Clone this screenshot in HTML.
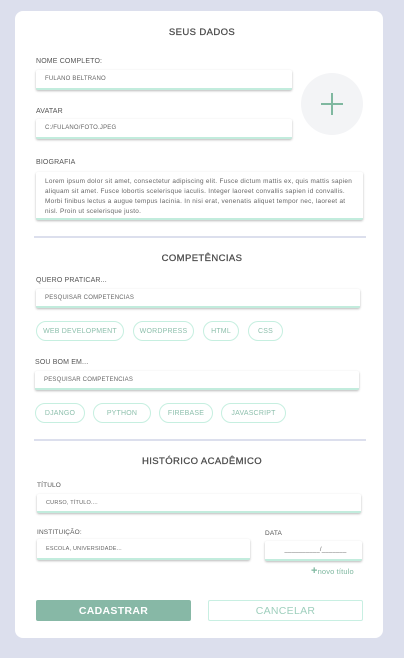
<!DOCTYPE html>
<html><head><meta charset="utf-8"><style>
*{margin:0;padding:0;box-sizing:border-box}
body{width:404px;height:658px;background:#dcdfed;font-family:"Liberation Sans",sans-serif;position:relative;overflow:hidden;color:#555}
.card{position:absolute;left:15px;top:11px;width:368px;height:627px;background:#fff;border-radius:8px}
.a{position:absolute}
.h{position:absolute;left:0;width:404px;text-align:center;font-size:9.5px;color:#4a4a4a;letter-spacing:.4px;-webkit-text-stroke:.25px #4a4a4a}
.l{position:absolute;font-size:7px;color:#555;white-space:nowrap;letter-spacing:.15px}
.in{position:absolute;background:#fff;border-bottom:2px solid #c2ecdd;box-shadow:0 1px 2px rgba(0,0,0,.28);border-radius:2px;font-size:6px;color:#666;padding-left:9px;display:flex;align-items:center;white-space:nowrap;letter-spacing:.2px}
.chip{position:absolute;border:1.5px solid #c6efe0;border-radius:10px;font-size:7px;color:#8dbfac;display:flex;align-items:center;justify-content:center;white-space:nowrap;letter-spacing:.2px}
.div{position:absolute;left:34px;width:332px;height:1.5px;background:#dcdfed}
</style></head><body>
<div class="card"></div>
<div class="h" style="top:27px">SEUS DADOS</div>
<div class="l" style="left:36px;top:58px">NOME COMPLETO:</div>
<div class="in" style="left:36px;top:70px;width:256px;height:20px">FULANO BELTRANO</div>
<div class="l" style="left:36px;top:108px">AVATAR</div>
<div class="in" style="left:36px;top:119px;width:256px;height:20px">C:/FULANO/FOTO.JPEG</div>
<div class="a" style="left:301px;top:73px;width:62px;height:62px;border-radius:50%;background:#f3f4f6"></div>
<div class="a" style="left:321px;top:103px;width:22px;height:2px;background:#7fb8a0"></div>
<div class="a" style="left:331px;top:93px;width:2px;height:22px;background:#7fb8a0"></div>
<div class="l" style="left:36px;top:159px">BIOGRAFIA</div>
<div class="in" style="left:36px;top:172px;width:327px;height:48px;display:block;padding:5px 9px 0 9px;font-size:6.4px;line-height:10px;white-space:normal;color:#666;letter-spacing:.3px">Lorem ipsum dolor sit amet, consectetur adipiscing elit. Fusce dictum mattis ex, quis mattis sapien aliquam sit amet. Fusce lobortis scelerisque iaculis. Integer laoreet convallis sapien id convallis. Morbi finibus lectus a augue tempus lacinia. In nisi erat, venenatis aliquet tempor nec, laoreet at nisl. Proin ut scelerisque justo.</div>
<div class="div" style="top:236px"></div>
<div class="h" style="top:253px">COMPETÊNCIAS</div>
<div class="l" style="left:36px;top:277px">QUERO PRATICAR...</div>
<div class="in" style="left:36px;top:289px;width:324px;height:19px">PESQUISAR COMPETENCIAS</div>
<div class="chip" style="left:36px;top:321px;width:88px;height:20px">WEB DEVELOPMENT</div>
<div class="chip" style="left:133px;top:321px;width:61px;height:20px">WORDPRESS</div>
<div class="chip" style="left:203px;top:321px;width:36px;height:20px">HTML</div>
<div class="chip" style="left:248px;top:321px;width:35px;height:20px">CSS</div>
<div class="l" style="left:35px;top:359px">SOU BOM EM...</div>
<div class="in" style="left:35px;top:371px;width:324px;height:19px">PESQUISAR COMPETENCIAS</div>
<div class="chip" style="left:35px;top:403px;width:50px;height:20px">DJANGO</div>
<div class="chip" style="left:93px;top:403px;width:58px;height:20px">PYTHON</div>
<div class="chip" style="left:159px;top:403px;width:54px;height:20px">FIREBASE</div>
<div class="chip" style="left:221px;top:403px;width:65px;height:20px">JAVASCRIPT</div>
<div class="div" style="top:439px"></div>
<div class="h" style="top:456px">HISTÓRICO ACADÊMICO</div>
<div class="l" style="left:37px;top:482px;font-size:6.5px">TÍTULO</div>
<div class="in" style="left:37px;top:494px;width:324px;height:19px;font-size:5.5px">CURSO, TÍTULO....</div>
<div class="l" style="left:37px;top:529px;font-size:6.5px">INSTITUIÇÃO:</div>
<div class="in" style="left:37px;top:539px;width:213px;height:21px;font-size:5.5px">ESCOLA, UNIVERSIDADE...</div>
<div class="l" style="left:265px;top:530px;font-size:6.5px">DATA</div>
<div class="in" style="left:265px;top:541px;width:97px;height:20px;justify-content:center;padding-left:4px;font-size:6px">__________/_______</div>
<div class="l" style="left:311px;top:567px;font-size:7.5px;color:#7fb8a0"><b style="font-size:11px;line-height:7px">+</b>novo título</div>
<div class="a" style="left:36px;top:600px;width:155px;height:21px;background:#87b8a6;border-radius:2px;color:#fff;font-size:10.5px;font-weight:bold;letter-spacing:.3px;display:flex;align-items:center;justify-content:center">CADASTRAR</div>
<div class="a" style="left:208px;top:600px;width:155px;height:21px;border:1.5px solid #c8efe2;border-radius:2px;color:#9fcfbd;font-size:10.5px;letter-spacing:.3px;display:flex;align-items:center;justify-content:center">CANCELAR</div>
</body></html>
